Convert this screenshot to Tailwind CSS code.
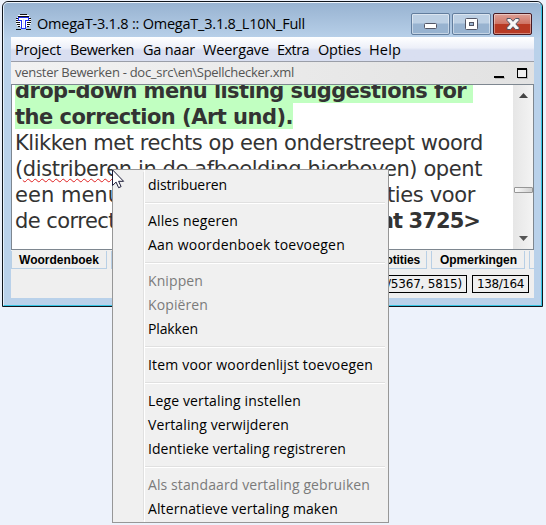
<!DOCTYPE html>
<html lang="nl">
<head>
<meta charset="utf-8">
<title>OmegaT</title>
<script src="https://cdn.jsdelivr.net/npm/@tailwindcss/browser@4"></script>
</head>
<body class="relative h-[525px] w-[546px] overflow-hidden bg-[#edf2fb] pt-px pl-[2px] font-['Open_Sans','Noto_Sans',sans-serif] text-[14px] text-black">
<!-- Window -->
<div class="flex h-[306px] w-[541px] flex-col overflow-hidden rounded-t-[6px] border border-[#10151c] bg-[#b9d1ea]">
  <div class="flex min-h-0 flex-1 flex-col rounded-t-[5px] border border-t-[#eef5fc] border-r-[#35c5e4] border-b-[#35c5e4] border-l-[#e4f0fb] bg-linear-to-b from-[#98b3d1] from-0% via-[#b9d1ea] via-[12%] to-[#b9d1ea] px-[7px] pb-[7px]">
    <!-- Title bar -->
    <header class="flex h-[34px] shrink-0 items-center pl-[4px]">
      <svg class="mt-[5px] h-[17px] w-[17px]" viewBox="0 0 17 17" shape-rendering="crispEdges">
        <path d="M5 0h7v1h2v2h1v2h1v5h-1v2h-2v1h-2v2h-5v-2H4v-1H2v-2H1V5h1V3h1V1h2z" fill="#fff"/>
        <path d="M5 .5h7M3 2.500h11M1 4.500h2m11 0h2M1 6.500h2m11 0h2M1 8.500h4m7 0h4M2 10.500h3m7 0h3M3 12.500h2m7 0h2M1 15.500h5m5 0h5" stroke="#111"/>
        <path d="M3 3h11v4h-3v8H6V7H3z" fill="#1f2ff2"/>
        <path d="M4 4h9v2h-3v8H7V6H4z" fill="#fff"/>
        <path d="M8 5h1v9H8z" fill="#e2e5fd"/>
      </svg>
      <span data-w="268" class="mt-[7px] ml-[5px] text-[14.5px] leading-5 whitespace-nowrap">OmegaT-3.1.8 :: OmegaT_3.1.8_L10N_Full</span>
      <div class="mt-[7px] ml-auto flex gap-[2px] pr-[2px]">
        <div class="flex h-[22px] w-[39px] items-center justify-center rounded-[2px] border border-[#627d9d] bg-linear-to-b from-[#bdd0e4] from-45% to-[#98b3d0] to-50% inset-ring inset-ring-white/45">
          <svg class="mt-[5px] h-[6px] w-[13px]" viewBox="0 0 13 6"><rect x=".5" y=".5" width="12" height="5" rx="1" fill="#fff" stroke="#535666"/></svg>
        </div>
        <div class="flex h-[22px] w-[39px] items-center justify-center rounded-[2px] border border-[#627d9d] bg-linear-to-b from-[#bdd0e4] from-45% to-[#98b3d0] to-50% inset-ring inset-ring-white/45">
          <svg class="h-[12px] w-[13px]" viewBox="0 0 13 12"><rect x=".5" y=".5" width="12" height="11" rx="1" fill="#fff" stroke="#535666"/><rect x="4.500" y="4.500" width="4" height="3" fill="#9fb8d3" stroke="#535666"/></svg>
        </div>
        <div class="flex h-[22px] w-[39px] items-center justify-center rounded-[2px] border border-[#471a22] bg-linear-to-b from-[#dda096] from-0% via-[#cf7566] via-48% to-[#b83a24] to-52% inset-ring inset-ring-white/40">
          <svg class="h-[12px] w-[14px]" viewBox="0 0 14 12"><path d="M1 .5h3.500L7 3.300 9.500.5H13V2.500L9.800 6l3.200 3.500v2H9.500L7 8.700 4.500 11.500H1v-2L4.200 6 1 2.500z" fill="#f7f7f7" stroke="#535666" stroke-linejoin="round"/></svg>
        </div>
      </div>
    </header>

    <div class="flex min-h-0 flex-1 flex-col bg-[#efefef]">
      <!-- Menu bar -->
      <nav class="flex h-[25px] shrink-0 items-center border-b border-[#9a9ea8] bg-linear-to-b from-white from-0% via-[#edf0f9] via-45% to-[#d9dff1] to-55% pt-px pl-[4px] text-[14.5px] whitespace-nowrap">
        <span class="w-[55px]"><span data-w="46">Project</span></span>
        <span class="w-[73px]"><span data-w="64">Bewerken</span></span>
        <span class="w-[60px]"><span data-w="52">Ga naar</span></span>
        <span class="w-[74px]"><span data-w="66">Weergave</span></span>
        <span class="w-[41px]"><span data-w="32">Extra</span></span>
        <span class="w-[51px]"><span data-w="43">Opties</span></span>
        <span data-w="32">Help</span>
      </nav>
      <!-- Dock title -->
      <div class="flex h-[22px] shrink-0 items-center bg-linear-to-r from-[#f2f2f2] to-[#e2e2e2] pr-[6px] pl-[4px]">
        <span data-w="279" class="text-[13px] whitespace-nowrap text-[#555]">venster Bewerken - doc_src\en\Spellchecker.xml</span>
        <svg class="ml-auto h-[12px] w-[35px]" viewBox="0 0 35 12" shape-rendering="crispEdges"><path d="M2 10h10v2H2zM25 2h10v10H25z" fill="#bbb"/><path d="M1 9h10v2H1zM24 1h10v10H24z" fill="#000"/><path d="M25 3h8v7h-8z" fill="#eee"/></svg>
      </div>
      <!-- Editor -->
      <main class="flex h-[166px] shrink-0 border border-[#7e8790] bg-white">
        <div class="flex-1 overflow-hidden pl-[3px]">
          <div class="-mt-[8px] font-['DejaVu_Sans',Verdana,sans-serif] text-[21px] leading-[28px] whitespace-nowrap text-[#333]">
            <div class="flex"><span class="h-[26px] w-[458px] bg-[#c1ffc1] font-bold"><span data-w="451">drop-down menu listing suggestions for</span></span></div>
            <div class="flex"><span class="h-[26px] w-[278px] bg-[#c1ffc1] font-bold"><span data-w="278">the correction (Art und).</span></span></div>
            <div class="h-[26px]"><span data-w="468">Klikken met rechts op een onderstreept woord</span></div>
            <div class="h-[26px]"><span data-w="467">(<span class="underline decoration-[#e02020] decoration-wavy decoration-1 underline-offset-[2px] [text-decoration-skip-ink:none]">distriberen</span> in de afbeelding hierboven) opent</span></div>
            <div class="flex h-[26px] justify-between pr-[38px]"><span data-w="106">een menu</span><span data-w="88">ties voor</span></div>
            <div class="flex h-[26px] justify-between pr-[33px]"><span data-w="101">de correct</span><span data-w="101" class="font-bold">nt 3725&gt;</span></div>
          </div>
        </div>
        <div class="flex w-[20px] flex-col items-center bg-linear-to-r from-[#e6e6e6] to-[#f3f3f3] pt-[8px] pb-[8px]">
          <svg class="h-[5px] w-[9px]" viewBox="0 0 9 5"><path d="M4.500 0 9 5H0z" fill="#444"/></svg>
          <div class="mt-[89px] h-[6px] w-[19px] rounded-[1px] border border-[#969696] bg-linear-to-r from-[#fafafa] to-[#cfcfcf]"></div>
          <svg class="mt-auto h-[5px] w-[9px]" viewBox="0 0 9 5"><path d="M0 0h9L4.500 5z" fill="#555"/></svg>
        </div>
      </main>
      <!-- Docked panes -->
      <div class="mt-px flex h-[18px] shrink-0 justify-between overflow-hidden font-['Liberation_Sans',Arial,sans-serif] text-[12px] leading-[16px] font-bold">
        <div class="flex gap-[4px]">
          <span class="w-[96px] border border-t-0 border-[#b8cfe5] border-t-white pt-px pl-[7px]"><span data-w="80">Woordenboek</span></span>
          <span class="w-[40px] border-l-2 border-[#b8cfe5]"></span>
        </div>
        <div class="flex gap-[4px]">
          <span class="flex w-[80px] justify-end border border-t-0 border-[#b8cfe5] pt-px pr-[6px]"><span data-w="43">Notities</span></span>
          <span class="w-[94px] border border-t-0 border-[#b8cfe5] pt-px pl-[8px]"><span data-w="77">Opmerkingen</span></span>
          <span class="w-[5px] border-b border-l border-[#b8cfe5]"></span>
        </div>
      </div>
      <!-- Status bar -->
      <footer class="mt-[6px] flex h-[18px] justify-end gap-[5px] pr-[5px] font-['DejaVu_Sans',Tahoma,sans-serif] text-[12px] leading-[17px] whitespace-nowrap">
        <span class="flex w-[110px] justify-end border border-black pr-[4px]"><span data-w="75">/5367, 5815)</span></span>
        <span class="w-[57px] border border-black pl-[4px]"><span data-w="47">138/164</span></span>
      </footer>
    </div>
  </div>
</div>

<!-- Context menu -->
<div class="absolute top-[169px] left-[112px] flex h-[354px] w-[277px] border border-[#979797] bg-[#f0f0f0] text-[14px] leading-[24px] whitespace-nowrap">
  <div class="mt-[2px] mb-[2px] w-[31px] border-r border-[#e0e0e0]"></div>
  <div class="flex flex-1 flex-col border-l border-white pt-[3px] pr-[3px]">
    <div class="h-[24px] pl-[3px]"><span data-w="79">distribueren</span></div>
    <hr class="my-[5px] h-[2px] border-t border-b border-t-[#e0e0e0] border-b-white">
    <div class="h-[24px] pl-[3px]"><span data-w="90">Alles negeren</span></div>
    <div class="h-[24px] pl-[3px]"><span data-w="197">Aan woordenboek toevoegen</span></div>
    <hr class="my-[5px] h-[2px] border-t border-b border-t-[#e0e0e0] border-b-white">
    <div class="h-[24px] pl-[3px] text-[#7b7b7b]"><span data-w="55">Knippen</span></div>
    <div class="h-[24px] pl-[3px] text-[#7b7b7b]"><span data-w="60">Kopiëren</span></div>
    <div class="h-[24px] pl-[3px]"><span data-w="50">Plakken</span></div>
    <hr class="my-[5px] h-[2px] border-t border-b border-t-[#e0e0e0] border-b-white">
    <div class="h-[24px] pl-[3px]"><span data-w="225">Item voor woordenlijst toevoegen</span></div>
    <hr class="my-[5px] h-[2px] border-t border-b border-t-[#e0e0e0] border-b-white">
    <div class="h-[24px] pl-[3px]"><span data-w="153">Lege vertaling instellen</span></div>
    <div class="h-[24px] pl-[3px]"><span data-w="141">Vertaling verwijderen</span></div>
    <div class="h-[24px] pl-[3px]"><span data-w="198">Identieke vertaling registreren</span></div>
    <hr class="my-[5px] h-[2px] border-t border-b border-t-[#e0e0e0] border-b-white">
    <div class="h-[24px] pl-[3px] text-[#7b7b7b]"><span data-w="222">Als standaard vertaling gebruiken</span></div>
    <div class="h-[24px] pl-[3px]"><span data-w="190">Alternatieve vertaling maken</span></div>
  </div>
</div>

<!-- Mouse pointer -->
<svg class="absolute top-[169px] left-[112px] h-[20px] w-[13px]" viewBox="0 0 13 20"><path d="M.5.800v15.700l3.600-3.400 2.500 5.600 2.500-1.100-2.500-5.300h5z" fill="#fff" stroke="#1c1c38"/></svg>

<script>
// Track each label so that it fills its given width.
function fit() {
  document.querySelectorAll('[data-w]').forEach(function (el) {
    el.style.letterSpacing = '0px';
    var r = document.createRange();
    r.selectNodeContents(el);
    var w = r.getBoundingClientRect().width;
    el.style.letterSpacing = ((+el.dataset.w - w) / el.textContent.length) + 'px';
  });
}
fit();
window.addEventListener('load', function () { fit(); requestAnimationFrame(fit); });
document.fonts.ready.then(fit);
</script>
</body>
</html>
